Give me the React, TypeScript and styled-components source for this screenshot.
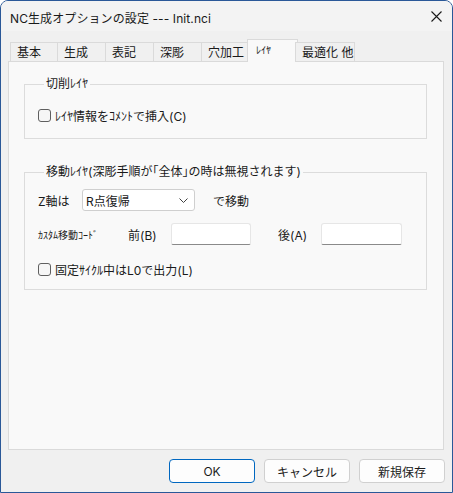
import styled, { createGlobalStyle } from 'styled-components';

const GlobalStyle = createGlobalStyle`
  html, body {
    margin: 0;
    padding: 0;
    background: #ffffff;
  }
  body {
    font-family: Inter, "Noto Sans CJK JP", sans-serif;
    font-size: 12px;
    color: #1a1a1a;
  }
`;

const Window = styled.div`
  width: 453px;
  height: 493px;
  box-sizing: border-box;
  border: 1px solid #2a5898;
  border-radius: 8px 8px 0 0;
  background: #f0f0f0;
  display: flex;
  flex-direction: column;
  overflow: hidden;
`;

const TitleBar = styled.div`
  height: 30px;
  display: flex;
  align-items: center;
  justify-content: space-between;
  padding: 0 0 0 9px;
  background: #f3f3f3;
`;

const Title = styled.div`
  font-size: 12px;
  letter-spacing: 0.1px;
  padding-top: 2px;
`;

const CloseButton = styled.div`
  width: 32px;
  height: 30px;
  display: flex;
  align-items: center;
  justify-content: center;
`;

const Body = styled.div`
  flex: 1;
  display: flex;
  flex-direction: column;
  padding: 8px 7px 9px 7px;
`;

const TabStrip = styled.div`
  display: flex;
  align-items: flex-end;
  height: 23px;
  padding-left: 2px;
  margin-bottom: -1px;
  position: relative;
  z-index: 1;
`;

const Tab = styled.div<{ $w: number; $active?: boolean }>`
  box-sizing: border-box;
  width: ${p => p.$w}px;
  height: ${p => (p.$active ? 23 : 20)}px;
  margin: 0 ${p => (p.$active ? -2 : 0)}px;
  border: 1px solid #dadada;
  border-bottom: ${p => (p.$active ? 'none' : '1px solid #dadada')};
  margin-left: ${p => (p.$active ? -2 : -1)}px;
  background: ${p => (p.$active ? '#f9f9f9' : '#f0f0f0')};
  padding: ${p => (p.$active ? '3px 0 0 8px' : '2px 0 0 6px')};
  font-size: ${p => (p.$active ? 10 : 12)}px;
  line-height: 15px;
  white-space: nowrap;
  &:first-child {
    margin-left: 0;
  }
`;

const Panel = styled.div`
  box-sizing: border-box;
  width: 436px;
  height: 389px;
  border: 1px solid #dadada;
  background: #f9f9f9;
  padding: 14px 16px 0 15px;
  display: flex;
  flex-direction: column;
  gap: 25px;
`;

const Group = styled.fieldset<{ $h: number }>`
  margin: 0;
  box-sizing: border-box;
  height: ${p => p.$h}px;
  border: 1px solid #dcdcdc;
  padding: 0 0 0 13px;
  min-inline-size: 0;
  display: flex;
  flex-direction: column;
`;

const Legend = styled.legend`
  margin-left: 6px;
  padding: 0 2px;
  font-size: 12px;
  line-height: 16px;
`;

const CheckRow = styled.label<{ $top: number }>`
  display: flex;
  align-items: center;
  gap: 4px;
  margin-top: ${p => p.$top}px;
  height: 16px;
  white-space: nowrap;
`;

const CheckBox = styled.span`
  box-sizing: border-box;
  width: 13px;
  height: 13px;
  border: 1px solid #5f5f5f;
  border-radius: 3px;
  background: #f6f6f6;
`;

const Row = styled.div<{ $top: number }>`
  display: flex;
  align-items: center;
  height: 22px;
  margin-top: ${p => p.$top}px;
  white-space: nowrap;
`;

const Label = styled.span<{ $w?: number; $small?: boolean }>`
  width: ${p => (p.$w ? `${p.$w}px` : 'auto')};
  flex: none;
  font-size: ${p => (p.$small ? 10 : 12)}px;
`;

const Combo = styled.div`
  box-sizing: border-box;
  width: 113px;
  height: 22px;
  margin-right: 18px;
  border: 1px solid #cfcfcf;
  border-radius: 3px;
  background: #ffffff;
  display: flex;
  align-items: center;
  justify-content: space-between;
  padding: 0 6px 0 3px;
`;

const Edit = styled.div<{ $w: number; $gap?: number }>`
  box-sizing: border-box;
  width: ${p => p.$w}px;
  height: 22px;
  margin-right: ${p => p.$gap || 0}px;
  background: #ffffff;
  border: 1px solid #e6e6e6;
  border-bottom: 1px solid #8a8a8a;
  border-radius: 3px 3px 2px 2px;
`;

const ButtonRow = styled.div`
  display: flex;
  justify-content: flex-end;
  gap: 9px;
  margin-top: 9px;
`;

const Button = styled.div<{ $default?: boolean }>`
  box-sizing: border-box;
  width: 86px;
  height: 24px;
  border-radius: 4px;
  border: 1px solid ${p => (p.$default ? '#0067c0' : '#d0d0d0')};
  background: #fdfdfd;
  display: flex;
  align-items: center;
  justify-content: center;
  font-size: 12px;
`;

const tabs = [
  { label: '基本', w: 48 },
  { label: '生成', w: 49 },
  { label: '表記', w: 49 },
  { label: '深彫', w: 49 },
  { label: '穴加工', w: 48 },
  { label: 'ﾚｲﾔ', w: 51, active: true },
  { label: '最適化 他', w: 60 },
];

export default function App() {
  return (
    <>
      <GlobalStyle />
      <Window>
        <TitleBar>
          <Title>NC生成オプションの設定 --- Init.nci</Title>
          <CloseButton>
            <svg width="11" height="11" viewBox="0 0 11 11">
              <path d="M0.5 0.5 L10.5 10.5 M10.5 0.5 L0.5 10.5" stroke="#1a1a1a" strokeWidth="1.1" />
            </svg>
          </CloseButton>
        </TitleBar>
        <Body>
          <TabStrip>
            {tabs.map(t => (
              <Tab key={t.label} $w={t.w} $active={t.active}>
                {t.label}
              </Tab>
            ))}
          </TabStrip>
          <Panel>
            <Group $h={63}>
              <Legend>切削ﾚｲﾔ</Legend>
              <CheckRow $top={15}>
                <CheckBox />
                ﾚｲﾔ情報をｺﾒﾝﾄで挿入(C)
              </CheckRow>
            </Group>
            <Group $h={126}>
              <Legend>移動ﾚｲﾔ(深彫手順が｢全体｣の時は無視されます)</Legend>
              <Row $top={9}>
                <Label $w={44}>Z軸は</Label>
                <Combo>
                  <span>R点復帰</span>
                  <svg width="9" height="5" viewBox="0 0 9 5">
                    <path d="M0.5 0.5 L4.5 4.5 L8.5 0.5" fill="none" stroke="#404040" strokeWidth="1" />
                  </svg>
                </Combo>
                <Label>で移動</Label>
              </Row>
              <Row $top={12}>
                <Label $w={90} $small>ｶｽﾀﾑ移動ｺｰﾄﾞ</Label>
                <Label $w={43}>前(B)</Label>
                <Edit $w={80} $gap={27} />
                <Label $w={43}>後(A)</Label>
                <Edit $w={81} />
              </Row>
              <CheckRow $top={16}>
                <CheckBox />
                固定ｻｲｸﾙ中はL0で出力(L)
              </CheckRow>
            </Group>
          </Panel>
          <ButtonRow>
            <Button $default>OK</Button>
            <Button>キャンセル</Button>
            <Button>新規保存</Button>
          </ButtonRow>
        </Body>
      </Window>
    </>
  );
}
